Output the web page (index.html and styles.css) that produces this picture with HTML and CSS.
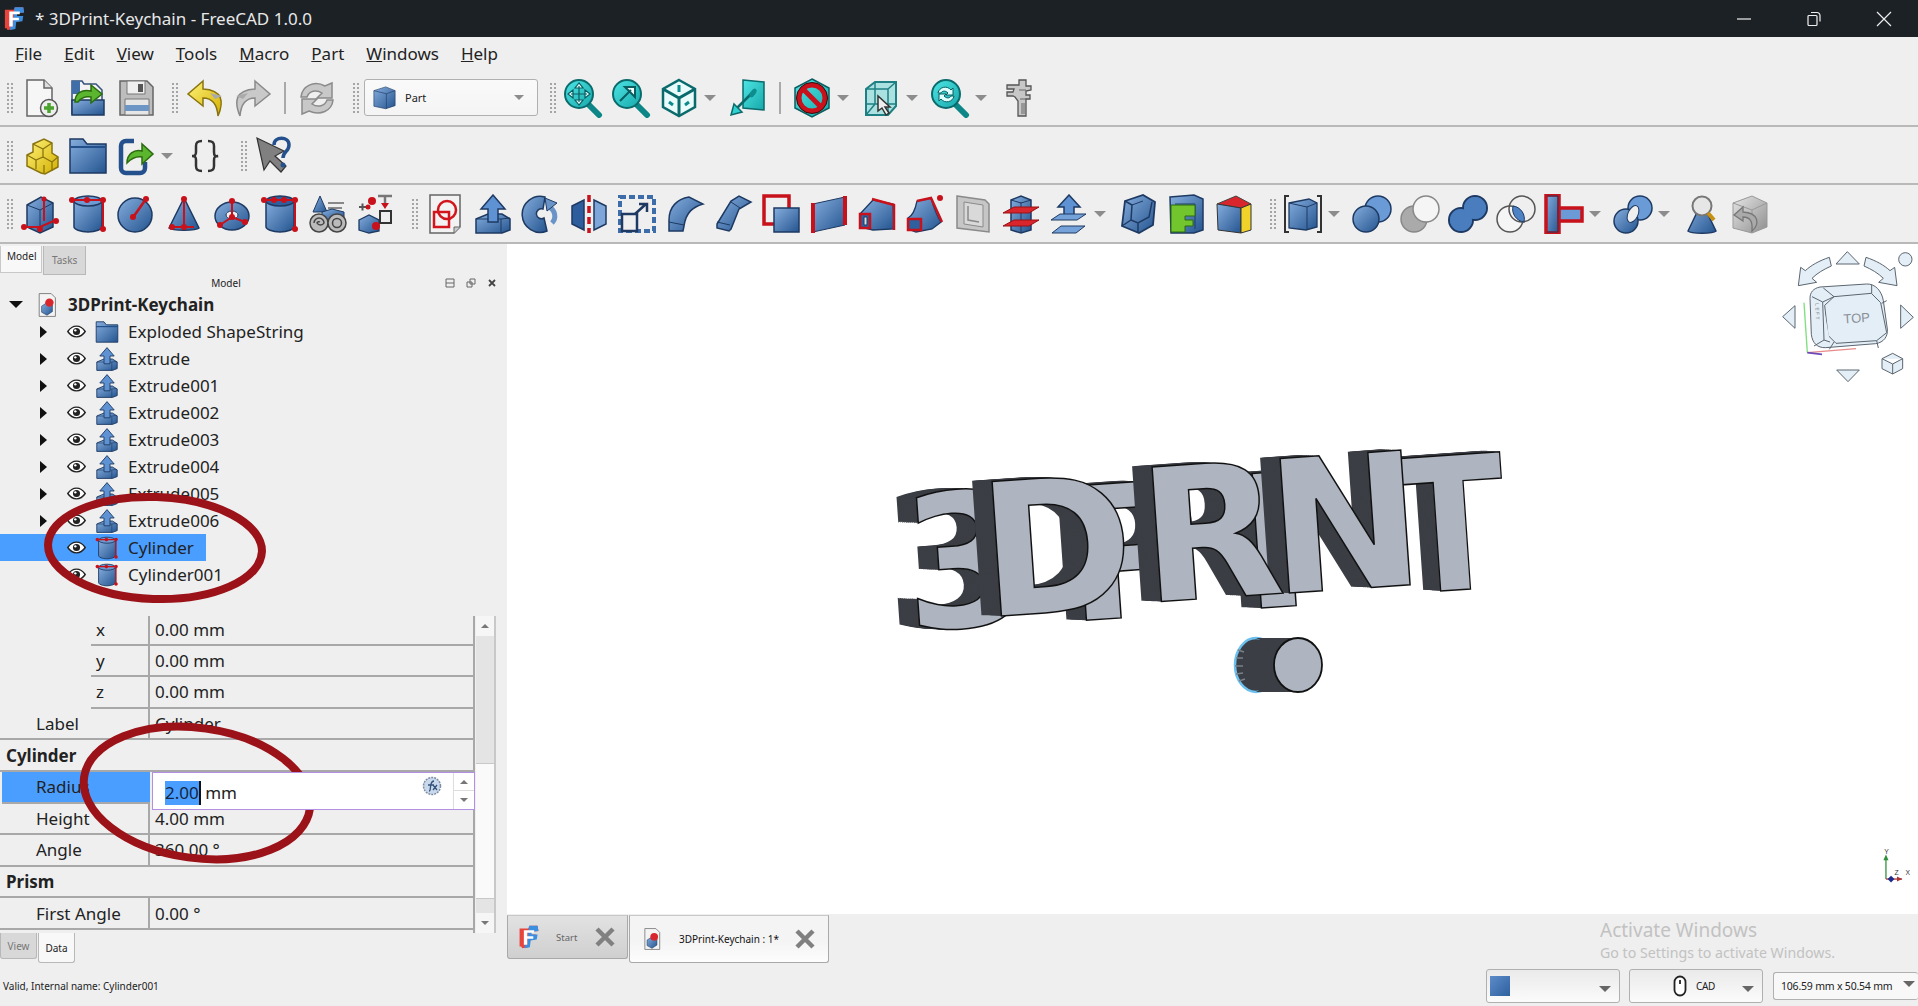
FILE: index.html
```html
<!DOCTYPE html>
<html>
<head>
    <title>3DPrint-Keychain - FreeCAD 1.0.0</title>
    <link rel="stylesheet" href="styles.css">
</head>
<body>
    <svg class="defs" xmlns="http://www.w3.org/2000/svg">
        <defs>
            <linearGradient id="b" x1="0" y1="0" x2="1" y2="1"><stop offset="0" stop-color="#86aede"/><stop offset="1" stop-color="#24548f"/></linearGradient>
            <linearGradient id="g" x1="0" y1="0" x2="1" y2="1"><stop offset="0" stop-color="#e6e6e6"/><stop offset="1" stop-color="#8e8e8e"/></linearGradient>
            <linearGradient id="y" x1="0" y1="0" x2="1" y2="1"><stop offset="0" stop-color="#fff27a"/><stop offset="1" stop-color="#d3b000"/></linearGradient>
            <linearGradient id="t" x1="0" y1="0" x2="1" y2="1"><stop offset="0" stop-color="#4fe5e5"/><stop offset="1" stop-color="#16a8aa"/></linearGradient>

            <symbol id="i-logo" viewBox="0 0 24 28"><path d="M1 4h10l2-3h9l1 6-9 1v3h6l-1 6-7 1-1 8-7 1-1-2H1z" fill="#e8443c"/><path d="M12 1h10l1 6-8 1v3h7l-1 6-7 1-1 8-6 1v-4h3z" fill="#3b8fe0"/><path d="M6 6h12v3h-8v4h7v3h-7v7H6z" fill="#fff"/></symbol>
            <symbol id="i-new" viewBox="0 0 40 40"><path d="M7 2h17l8 8v28H7z" fill="#f6f6f6" stroke="#666" stroke-width="1.5"/><path d="M24 2v8h8" fill="#ddd" stroke="#666" stroke-width="1.5"/><circle cx="29" cy="30" r="8.5" fill="#eee" stroke="#555" stroke-width="1.5"/><path d="M29 25v10M24 30h10" stroke="#4aa32a" stroke-width="3.5"/></symbol>
            <symbol id="i-open" viewBox="0 0 40 40"><path d="M4 3h10l2 3h12l6 6v24H4z" fill="#f2f2f2" stroke="#33527c" stroke-width="1.5"/><path d="M4 3h8v13H4z" fill="#3f6ea8"/><path d="M4 22h32v15H4z" fill="url(#b)" stroke="#1e3a63" stroke-width="1.5"/><path d="M7 24c0-9 7-13 16-11V7l11 9-11 9v-6c-6-1-10 1-13 5z" fill="#5bb52e" stroke="#2b6b10" stroke-width="1.5"/></symbol>
            <symbol id="i-save" viewBox="0 0 40 40"><path d="M4 3h27l6 6v28H4z" fill="#bdbdbd" stroke="#666" stroke-width="1.5"/><path d="M11 3h18v13H11z" fill="#eee" stroke="#777"/><path d="M22 6h5v8h-5z" fill="#555"/><path d="M9 21h24v16H9z" fill="#e6e6e6" stroke="#777"/><path d="M9 27h24v6H9z" fill="#6d96c6"/></symbol>
            <symbol id="i-undo" viewBox="0 0 40 40"><path d="M18 3 3 16l15 12v-8c9 0 14 5 15 18 6-14 5-26-15-27z" fill="url(#y)" stroke="#8a7410" stroke-width="1.5"/><path d="M25 15l12 3-7 3z" fill="#aaa"/></symbol>
            <symbol id="i-redo" viewBox="0 0 40 40"><path d="M22 3l15 13-15 12v-8C13 20 8 25 7 38 1 24 2 12 22 11z" fill="#c9c9c9" stroke="#8a8a8a" stroke-width="1.5"/><path d="M15 15 3 18l7 3z" fill="#aaa"/></symbol>
            <symbol id="i-refresh" viewBox="0 0 40 40"><path d="M4 19C5 8 17 2 28 8l7-3v15H20l5-5c-6-4-13-2-15 4z" fill="#c8c8c8" stroke="#8b8b8b" stroke-width="1.5"/><path d="M36 22c-1 11-13 16-24 11l-7 3V21h15l-5 5c6 4 13 2 15-4z" fill="#c8c8c8" stroke="#8b8b8b" stroke-width="1.5"/></symbol>
            <symbol id="i-fitall" viewBox="0 0 40 40"><path d="M24 25l12 12" stroke="#0c8686" stroke-width="6" stroke-linecap="round"/><circle cx="16" cy="16" r="14" fill="url(#t)" stroke="#0b6a6c" stroke-width="2"/><path d="M16 8v16M8 16h16M16 5l-4 5h8zM16 27l-4-5h8zM5 16l5-4v8zM27 16l-5-4v8z" fill="#dff" stroke="#0b5d60" stroke-width="1.2"/></symbol>
            <symbol id="i-fitsel" viewBox="0 0 40 40"><path d="M24 25l12 12" stroke="#0c8686" stroke-width="6" stroke-linecap="round"/><circle cx="16" cy="16" r="14" fill="url(#t)" stroke="#0b6a6c" stroke-width="2"/><path d="M9 23 20 12M14 9h10v10z" fill="#eff" stroke="#0b5d60" stroke-width="2"/></symbol>
            <symbol id="i-isocube" viewBox="0 0 40 40"><path d="M20 2 36 11v18L20 38 4 29V11z" fill="#e9fbfb" stroke="#0b6a6c" stroke-width="2.5"/><path d="M4 11l16 9 16-9M20 20v18" fill="none" stroke="#0b6a6c" stroke-width="3"/><path d="M20 7v7M10 24l4 3M30 24l-4 3" stroke="#0f8a8c" stroke-width="3"/></symbol>
            <symbol id="i-plane" viewBox="0 0 40 40"><path d="M15 2 36 4v28l-21-2z" fill="url(#t)" stroke="#0b6a6c" stroke-width="1.5"/><path d="M24 15 6 33" stroke="#0b6a6c" stroke-width="2.5"/><path d="M3 37l3-11 8 8z" fill="#2fd0d0" stroke="#0b6a6c" stroke-width="1.5"/><ellipse cx="25" cy="15" rx="2.5" ry="5" transform="rotate(35 25 15)" fill="#0e8d8f"/></symbol>
            <symbol id="i-nodraw" viewBox="0 0 40 40"><path d="M20 1 37 10v20L20 39 3 30V10z" fill="url(#t)" stroke="#0b5d60" stroke-width="1.5"/><circle cx="20" cy="20" r="13" fill="none" stroke="#c8111a" stroke-width="5"/><circle cx="20" cy="20" r="15.5" fill="none" stroke="#3a0a0a"/><path d="M11 11l18 18" stroke="#c8111a" stroke-width="5"/></symbol>
            <symbol id="i-boxsel" viewBox="0 0 40 40"><path d="M5 11 14 4h21v24l-8 9H5z" fill="#8fdcdc" fill-opacity=".7" stroke="#1f8083" stroke-width="2"/><path d="M5 11h22v26M27 11l8-7M14 4v22H5M14 26l-9 11M14 26h21" fill="none" stroke="#1f8083" stroke-width="1.5"/><path d="M17 18v15l4-3 4 7 3-2-4-6h5z" fill="#eee" stroke="#333" stroke-width="1.5"/></symbol>
            <symbol id="i-sync" viewBox="0 0 40 40"><path d="M24 25l12 12" stroke="#0c8686" stroke-width="6" stroke-linecap="round"/><circle cx="16" cy="16" r="14" fill="url(#t)" stroke="#0b6a6c" stroke-width="2"/><path d="M8 15c1-6 9-8 13-3l2-2v7h-7l2-2c-3-3-6-2-7 0zM24 18c-1 6-9 8-13 3l-2 2v-7h7l-2 2c3 3 6 2 7 0z" fill="#dff" stroke="#0b5d60"/></symbol>
            <symbol id="i-caliper" viewBox="0 0 40 40"><path d="M8 7h12V2h7v6h5v4l-5 1v4h4v4h-4v17h-8V23l-3-4-2-1H8v-4h6l1-3H8z" fill="#c7c7c7" stroke="#555" stroke-width="1.3"/><path d="M20 12h7M21 21h6M23 25v11M25 25v11" stroke="#666"/></symbol>
            <symbol id="i-parts" viewBox="0 0 40 40"><path d="M13 8 24 3l8 4v10l6 4v10l-13 7-4-1L7 30V19l6-3z" fill="url(#y)" stroke="#8a7410" stroke-width="1.5"/><path d="M13 8l10 5 9-6M23 13v9M7 19l9 5 7-3 9 5 6-5M16 24v9M32 26v9M24 37v-8" fill="none" stroke="#8a7410" stroke-width="1.3"/></symbol>
            <symbol id="i-folder" viewBox="0 0 40 40"><path d="M2 3h13l4 5h19v29H2z" fill="url(#b)" stroke="#1e3a63" stroke-width="1.5"/><path d="M2 11h36" stroke="#23508a" stroke-width="2"/></symbol>
            <symbol id="i-link" viewBox="0 0 40 40"><path d="M18 5H10a5 5 0 0 0-5 5v22a5 5 0 0 0 5 5h14a5 5 0 0 0 5-5v-6" fill="none" stroke="#24518d" stroke-width="4.5"/><path d="M11 27c0-9 7-14 15-12V8l11 10-11 10v-7c-6-1-10 1-15 6z" fill="#5bb52e" stroke="#2b6b10" stroke-width="1.5"/></symbol>
            <symbol id="i-braces" viewBox="0 0 40 40"><path d="M17 5c-5 0-6 2-6 5v6c0 3-1 4-4 4 3 0 4 1 4 4v6c0 3 1 5 6 5M23 5c5 0 6 2 6 5v6c0 3 1 5 4 4-3 0-4 1-4 4v6c0 3-1 5-6 5" fill="none" stroke="#333" stroke-width="2.5"/></symbol>
            <symbol id="i-help" viewBox="0 0 40 40"><path d="M3 2l7 32 6-9 11 11 5-6-11-10 9-5z" fill="#808080" stroke="#333" stroke-width="1.2"/><path d="M20 9c0-9 15-9 15 0 0 7-6 6-6 13" fill="none" stroke="#24518d" stroke-width="3.5"/><circle cx="29" cy="29" r="2.5" fill="#24518d"/></symbol>

            <symbol id="i-box" viewBox="0 0 40 40"><path d="M7 11 21 3l12 6v24l-13 6L7 33z" fill="url(#b)" stroke="#1e3a63" stroke-width="1.5"/><path d="M7 11l13 5 13-7M20 16v23" fill="none" stroke="#1e3a63"/><path d="M4 33h16l16-7M24 5v22" fill="none" stroke="#c8111a" stroke-width="2"/><circle cx="4" cy="33" r="3" fill="#c8111a"/><circle cx="20" cy="35" r="3" fill="#c8111a"/><circle cx="36" cy="27" r="3" fill="#c8111a"/><circle cx="24" cy="5" r="2.5" fill="#c8111a"/></symbol>
            <symbol id="i-cyl" viewBox="0 0 40 40"><path d="M6 7v26c0 2 6 5 14 5s14-3 14-5V7z" fill="url(#b)" stroke="#1e3a63" stroke-width="1.5"/><ellipse cx="20" cy="7" rx="14" ry="5" fill="#6e9bd4" stroke="#1e3a63" stroke-width="1.5"/><path d="M4 6h31v29" fill="none" stroke="#c8111a" stroke-width="2"/><circle cx="4" cy="6" r="3" fill="#c8111a"/><circle cx="19" cy="6" r="3" fill="#c8111a"/><circle cx="35" cy="6" r="3" fill="#c8111a"/><circle cx="35" cy="35" r="3" fill="#c8111a"/></symbol>
            <symbol id="i-sphere" viewBox="0 0 40 40"><circle cx="19" cy="21" r="17" fill="url(#b)" stroke="#1e3a63" stroke-width="1.5"/><path d="M18 22 30 5" stroke="#c8111a" stroke-width="2.5"/><circle cx="17" cy="23" r="3" fill="#c8111a"/><circle cx="30" cy="5" r="3" fill="#c8111a"/></symbol>
            <symbol id="i-cone" viewBox="0 0 40 40"><path d="M20 4 5 34c3 3 27 3 30 0z" fill="url(#b)" stroke="#1e3a63" stroke-width="1.5"/><path d="M20 4v30M8 33h22" stroke="#c8111a" stroke-width="2"/><circle cx="20" cy="5" r="3" fill="#c8111a"/><circle cx="8" cy="33" r="3" fill="#c8111a"/><circle cx="20" cy="33" r="3" fill="#c8111a"/></symbol>
            <symbol id="i-torus" viewBox="0 0 40 40"><ellipse cx="20" cy="22" rx="17" ry="14" fill="url(#b)" stroke="#1e3a63" stroke-width="1.5"/><ellipse cx="20" cy="21" rx="6" ry="4" fill="#efefef" stroke="#1e3a63"/><path d="M20 7v16M8 31l12-8 13 5" fill="none" stroke="#c8111a" stroke-width="2"/><circle cx="20" cy="7" r="3" fill="#c8111a"/><circle cx="20" cy="23" r="3" fill="#c8111a"/><circle cx="8" cy="31" r="3" fill="#c8111a"/><circle cx="33" cy="28" r="3" fill="#c8111a"/></symbol>
            <symbol id="i-tube" viewBox="0 0 40 40"><path d="M6 7v26c0 2 6 5 14 5s14-3 14-5V7z" fill="url(#b)" stroke="#1e3a63" stroke-width="1.5"/><ellipse cx="20" cy="7" rx="14" ry="5" fill="#2f5f9e" stroke="#1e3a63" stroke-width="1.5"/><path d="M4 6h31v29" fill="none" stroke="#c8111a" stroke-width="2"/><circle cx="4" cy="6" r="3" fill="#c8111a"/><circle cx="14" cy="6" r="3" fill="#c8111a"/><circle cx="24" cy="6" r="3" fill="#c8111a"/><circle cx="35" cy="6" r="3" fill="#c8111a"/><circle cx="35" cy="35" r="3" fill="#c8111a"/></symbol>
            <symbol id="i-prims" viewBox="0 0 40 40"><path d="M12 2 5 18h14z" fill="url(#b)" stroke="#1e3a63"/><path d="M20 9h16M20 14h14" stroke="#888" stroke-width="2"/><path d="M14 18l10-3 12 3v8H14z" fill="url(#b)" stroke="#1e3a63"/><circle cx="11" cy="29" r="9" fill="#bbb" stroke="#444" stroke-width="1.5"/><path d="M6 29a5 5 0 0 1 10 0 4 4 0 0 1-7 0 2 2 0 0 1 3-1" fill="none" stroke="#444" stroke-width="1.5"/><circle cx="29" cy="29" r="9" fill="#bbb" stroke="#444" stroke-width="1.5"/><circle cx="29" cy="29" r="4.5" fill="none" stroke="#444" stroke-width="1.5"/></symbol>
            <symbol id="i-builder" viewBox="0 0 40 40"><path d="M3 26 13 21l10 5v11l-10 2-10-3z" fill="url(#b)" stroke="#1e3a63" stroke-width="1.3"/><path d="M22 2h14M29 2v10" stroke="#777" stroke-width="2.5"/><path d="M25 9h8l-4 6z" fill="#c8111a"/><path d="M24 17h11v12H24z" fill="#eee" stroke="#333" stroke-width="2"/><path d="M3 13h7M6.5 9.5v7" stroke="#555" stroke-width="2"/><circle cx="16" cy="7" r="4" fill="#c8111a"/><circle cx="20" cy="32" r="4" fill="#c8111a"/><circle cx="12" cy="13" r="2.5" fill="#c8111a"/></symbol>
            <symbol id="i-sketch" viewBox="0 0 40 40"><path d="M5 1h30v32l-6 6H5z" fill="#f2f2f2" stroke="#666" stroke-width="1.5"/><path d="M35 33h-6v6" fill="#ccc" stroke="#666"/><path d="M9 18h15v15H9z" fill="none" stroke="#d2141c" stroke-width="2.5"/><circle cx="22" cy="16" r="9" fill="none" stroke="#d2141c" stroke-width="2.5"/></symbol>
            <symbol id="i-extrude" viewBox="0 0 40 40"><path d="M3 25l12-5h14l8 5v11l-8 3H3z" fill="url(#b)" stroke="#1e3a63" stroke-width="1.5"/><path d="M3 25h25l9-1M28 25v14" fill="none" stroke="#1e3a63"/><path d="M20 1 8 15h7v13h10V15h7z" fill="#5f92d2" stroke="#1e3a63" stroke-width="1.5"/></symbol>
            <symbol id="i-revolve" viewBox="0 0 40 40"><path d="M24 3A18 18 0 1 0 26 37l-3-13a5 5 0 1 1-1-9z" fill="url(#b)" stroke="#1e3a63" stroke-width="1.5"/><path d="M28 13a10 10 0 0 1 3 16" fill="none" stroke="#6a94c8" stroke-width="5"/><path d="M24 4l12 5-10 8z" fill="#6a94c8" stroke="#1e3a63"/></symbol>
            <symbol id="i-mirror" viewBox="0 0 40 40"><path d="M3 12 15 6v30L3 30z" fill="#2d5d9c" stroke="#1e3a63" stroke-width="1.5"/><path d="M37 12 25 6v30l12-6z" fill="#7ea6d8" stroke="#1e3a63" stroke-width="1.5"/><path d="M20 1v38" stroke="#c8111a" stroke-width="3.5" stroke-dasharray="7 4"/></symbol>
            <symbol id="i-scale" viewBox="0 0 40 40"><path d="M3 3h34v34H3z" fill="none" stroke="#3d6da8" stroke-width="4" stroke-dasharray="6 3"/><path d="M5 20h15v17H5z" fill="#efefef" stroke="#1e3a63" stroke-width="2.5"/><path d="M18 20 29 10M22 10h8v8" fill="none" stroke="#1e3a63" stroke-width="2.5"/></symbol>
            <symbol id="i-fillet" viewBox="0 0 40 40"><path d="M4 37V26C4 13 12 5 24 3l14 7c-10 3-17 8-19 22l-1 5z" fill="url(#b)" stroke="#1e3a63" stroke-width="1.5"/><path d="M4 28l15 3" stroke="#1e3a63"/></symbol>
            <symbol id="i-chamfer" viewBox="0 0 40 40"><path d="M4 30 18 7l8-5 12 6-12 7-8 20-2 2-12-3z" fill="url(#b)" stroke="#1e3a63" stroke-width="1.5"/><path d="M4 28l13 3M18 8l9 6" stroke="#1e3a63"/></symbol>
            <symbol id="i-offset" viewBox="0 0 40 40"><path d="M3 2h25v28H3z" fill="none" stroke="#c8111a" stroke-width="3.5"/><path d="M13 14h25v24H13z" fill="url(#b)" stroke="#1e3a63" stroke-width="1.5"/></symbol>
            <symbol id="i-ruled" viewBox="0 0 40 40"><path d="M4 10 36 3v28L4 38z" fill="url(#b)" stroke="#1e3a63"/><path d="M4 9v30M36 2v29" stroke="#c8111a" stroke-width="4"/></symbol>
            <symbol id="i-loft" viewBox="0 0 40 40"><path d="M3 20 16 6l20 4 1 25-21 1-13-3z" fill="url(#b)" stroke="#1e3a63" stroke-width="1.3"/><path d="M15 5l22 6v25" fill="none" stroke="#c8111a" stroke-width="2.5"/><path d="M3 20h10v14H3z" fill="#2e5f9f" stroke="#c8111a" stroke-width="2.5"/><path d="M7 23h3v8H7z" fill="#ddd" stroke="#1e3a63"/></symbol>
            <symbol id="i-sweep" viewBox="0 0 40 40"><path d="M3 24c4-2 7-7 9-17l14-3c3 10 5 17 10 24l-9 7-16 3-8-3z" fill="url(#b)" stroke="#1e3a63" stroke-width="1.3"/><path d="M12 7l14-3 11 24" fill="none" stroke="#c8111a" stroke-width="2.5"/><path d="M3 25h13v11H3z" fill="#2e5f9f" stroke="#c8111a" stroke-width="2.5"/><circle cx="35" cy="4" r="3" fill="#c8111a"/></symbol>
            <symbol id="i-thick" viewBox="0 0 40 40"><path d="M4 2l28 4 4 4v28L4 34z" fill="#c6c6c6" stroke="#8a8a8a" stroke-width="1.5"/><path d="M11 8l19 3v22l-19-3z" fill="#d9d9d9" stroke="#8a8a8a"/><path d="M15 12v14l11 2" fill="none" stroke="#8a8a8a" stroke-width="1.5"/></symbol>
            <symbol id="i-sections" viewBox="0 0 40 40"><path d="M10 6l10-4 10 4v30l-10 3-10-3z" fill="url(#b)" stroke="#1e3a63" stroke-width="1.5"/><path d="M20 8v31M10 6l10 3 10-3" fill="none" stroke="#1e3a63"/><path d="M2 19 13 13h25l-10 6zM2 32l11-6h25l-10 6z" fill="#d8262c" stroke="#9a1015"/></symbol>
            <symbol id="i-push" viewBox="0 0 40 40"><path d="M20 1 9 13h6v9h10v-9h6z" fill="#5f92d2" stroke="#1e3a63" stroke-width="1.5"/><path d="M2 26 11 20h26l-9 6z" fill="#76a2da" stroke="#1e3a63"/><path d="M3 39l9-7h24l-9 7z" fill="#76a2da" stroke="#1e3a63"/></symbol>
            <symbol id="i-solid" viewBox="0 0 40 40"><path d="M7 7 25 1l12 7-2 23-14 8-17-7z" fill="url(#b)" stroke="#1e3a63" stroke-width="1.8"/><path d="M7 7l7 4-1 15 7 3 11-6 3-15M20 29v10M13 26 4 32" fill="none" stroke="#1e3a63" stroke-width="1.5"/><path d="M14 11l11-4" stroke="#1e3a63"/></symbol>
            <symbol id="i-fshape" viewBox="0 0 40 40"><path d="M4 3 28 1l9 4v31l-9 3H5z" fill="url(#b)" stroke="#1e3a63" stroke-width="1.5"/><path d="M9 10h20v25" fill="none" stroke="#1e3a63"/><path d="M5 11h24v11H19v4h8v6h-8v6H5z" fill="#72c52d" stroke="#2a6b10"/></symbol>
            <symbol id="i-colorcube" viewBox="0 0 40 40"><path d="M3 10 22 2l15 8-10 4z" fill="#d8262c" stroke="#444"/><path d="M3 10l24 4v25L4 36z" fill="url(#b)" stroke="#333"/><path d="M27 14l10-4v26l-10 3z" fill="#f0d22a" stroke="#333"/></symbol>
            <symbol id="i-compound" viewBox="0 0 40 40"><path d="M6 2H2v36h4M34 2h4v36h-4" fill="none" stroke="#333" stroke-width="2"/><path d="M6 9l20-4 8 4v24l-11 3-17-2z" fill="url(#b)" stroke="#1e3a63" stroke-width="1.3"/><path d="M6 9l18 4 10-4M24 13v23" fill="none" stroke="#1e3a63"/></symbol>
            <symbol id="i-bool" viewBox="0 0 40 40"><circle cx="26" cy="15" r="13" fill="#6b9bd6" stroke="#1e3a63" stroke-width="1.5"/><circle cx="14" cy="25" r="13" fill="url(#b)" stroke="#1e3a63" stroke-width="1.5"/></symbol>
            <symbol id="i-cut" viewBox="0 0 40 40"><circle cx="14" cy="25" r="13" fill="#aaa" stroke="#888" stroke-width="1.5"/><circle cx="26" cy="15" r="13" fill="#f5f5f5" stroke="#888" stroke-width="1.5"/></symbol>
            <symbol id="i-union" viewBox="0 0 40 40"><circle cx="13" cy="26" r="12" fill="#3f72b4" stroke="#1e3a63" stroke-width="2"/><circle cx="27" cy="14" r="12" fill="#3f72b4" stroke="#1e3a63" stroke-width="2"/><circle cx="13" cy="26" r="11" fill="#4a7dbe"/><circle cx="27" cy="14" r="11" fill="#4a7dbe"/></symbol>
            <symbol id="i-common" viewBox="0 0 40 40"><circle cx="14" cy="25" r="13" fill="#f5f5f5" stroke="#555" stroke-width="1.5"/><circle cx="26" cy="15" r="13" fill="none" stroke="#555" stroke-width="1.5"/><path d="M17 12a13 13 0 0 1 11 16 13 13 0 0 1-11-16z" fill="#4d82c4" stroke="#1e3a63"/></symbol>
            <symbol id="i-join" viewBox="0 0 40 40"><path d="M2 1h13v38H2z" fill="url(#b)" stroke="#c8111a" stroke-width="3.5"/><path d="M15 14h23v13H15z" fill="#6b9bd6" stroke="#c8111a" stroke-width="3.5"/><path d="M3 2h11v36H3" fill="none" stroke="#1e3a63"/></symbol>
            <symbol id="i-split" viewBox="0 0 40 40"><circle cx="27" cy="14" r="12" fill="#6b9bd6" stroke="#1e3a63" stroke-width="1.5"/><circle cx="13" cy="27" r="12" fill="url(#b)" stroke="#1e3a63" stroke-width="1.5"/><ellipse cx="20" cy="20" rx="5" ry="9" transform="rotate(25 20 20)" fill="#efefef" stroke="#1e3a63"/></symbol>
            <symbol id="i-check" viewBox="0 0 40 40"><path d="M20 8 6 37c3 3 25 3 28 0z" fill="url(#b)" stroke="#1e3a63" stroke-width="1.5"/><circle cx="20" cy="12" r="9.5" fill="#e6e6e6" stroke="#777" stroke-width="2"/><path d="M26 19l6 7" stroke="#c89010" stroke-width="4"/></symbol>
            <symbol id="i-defeat" viewBox="0 0 40 40"><path d="M3 9 22 2l15 7v24l-15 6-19-5z" fill="url(#g)" stroke="#999"/><path d="M3 9l19 7 15-7M22 16v23" fill="none" stroke="#999"/><path d="M13 13 4 21l9 6v-4c6 0 10 3 9 14 8-7 7-18-9-19z" fill="#aaa" stroke="#777" stroke-width="1.3"/></symbol>
            <symbol id="i-doc" viewBox="0 0 40 40"><path d="M7 1h20l7 7v31H7z" fill="#f4f4f4" stroke="#777" stroke-width="1.5"/><path d="M11 22l9-6 9 4v11l-9 6-9-5z" fill="url(#b)" stroke="#1e3a63"/><circle cx="24" cy="16" r="7" fill="#d8262c"/></symbol>
            <symbol id="i-eye" viewBox="0 0 24 16"><path d="M1 8c6-9 16-9 22 0-6 9-16 9-22 0z" fill="#fff" stroke="#222" stroke-width="1.8"/><circle cx="12" cy="8" r="4.5" fill="#222"/><circle cx="10.5" cy="6.5" r="1.5" fill="#fff"/></symbol>
        </defs>
    </svg>

    <div class="titlebar">
        <svg class="title-logo"><use href="#i-logo"/></svg>
        <span class="title-text">* 3DPrint-Keychain - FreeCAD 1.0.0</span>
        <div class="win-btns">
            <svg viewBox="0 0 16 16"><path d="M1 8h14" stroke="#eee" stroke-width="1.2"/></svg>
            <svg viewBox="0 0 16 16"><path d="M5 1.500h6a3 3 0 0 1 3 3v6M2 5.500a1 1 0 0 1 1-1h7a1 1 0 0 1 1 1v8a1 1 0 0 1-1 1H3a1 1 0 0 1-1-1z" fill="none" stroke="#eee" stroke-width="1.2"/></svg>
            <svg viewBox="0 0 16 16"><path d="M1 1l14 14M15 1 1 15" stroke="#eee" stroke-width="1.2"/></svg>
        </div>
    </div>

    <div class="menubar">
        <span><u>F</u>ile</span><span><u>E</u>dit</span><span><u>V</u>iew</span><span><u>T</u>ools</span><span><u>M</u>acro</span><span><u>P</u>art</span><span><u>W</u>indows</span><span><u>H</u>elp</span>
    </div>

    <div class="toolbar tb1">
        <i class="grip"></i>
        <div class="tool"><svg><use href="#i-new"/></svg></div>
        <div class="tool"><svg><use href="#i-open"/></svg></div>
        <div class="tool"><svg><use href="#i-save"/></svg></div>
        <i class="grip"></i>
        <div class="tool"><svg><use href="#i-undo"/></svg></div>
        <div class="tool"><svg><use href="#i-redo"/></svg></div>
        <i class="sep"></i>
        <div class="tool"><svg><use href="#i-refresh"/></svg></div>
        <i class="grip"></i>
        <div class="wb-combo">
            <svg class="wb-icon" viewBox="0 0 40 40"><path d="M3 9 22 3l15 6v24l-15 5-19-4z" fill="url(#b)" stroke="#1e3a63"/><path d="M3 9l20 5 14-5M23 14v24" fill="none" stroke="#1e3a63"/></svg>
            <span>Part</span>
            <i class="caret"></i>
        </div>
        <i class="grip"></i>
        <div class="tool"><svg><use href="#i-fitall"/></svg></div>
        <div class="tool"><svg><use href="#i-fitsel"/></svg></div>
        <div class="tool"><svg><use href="#i-isocube"/></svg></div>
        <i class="drop"></i>
        <div class="tool"><svg><use href="#i-plane"/></svg></div>
        <i class="sep"></i>
        <div class="tool"><svg><use href="#i-nodraw"/></svg></div>
        <i class="drop"></i>
        <div class="tool"><svg><use href="#i-boxsel"/></svg></div>
        <i class="drop"></i>
        <div class="tool"><svg><use href="#i-sync"/></svg></div>
        <i class="drop"></i>
        <div class="tool"><svg><use href="#i-caliper"/></svg></div>
    </div>

    <div class="toolbar tb2">
        <i class="grip"></i>
        <div class="tool"><svg><use href="#i-parts"/></svg></div>
        <div class="tool"><svg><use href="#i-folder"/></svg></div>
        <div class="tool"><svg><use href="#i-link"/></svg></div>
        <i class="drop"></i>
        <div class="tool"><svg><use href="#i-braces"/></svg></div>
        <i class="grip"></i>
        <div class="tool"><svg><use href="#i-help"/></svg></div>
    </div>

    <div class="toolbar tb3">
        <i class="grip"></i>
        <div class="tool"><svg><use href="#i-box"/></svg></div>
        <div class="tool"><svg><use href="#i-cyl"/></svg></div>
        <div class="tool"><svg><use href="#i-sphere"/></svg></div>
        <div class="tool"><svg><use href="#i-cone"/></svg></div>
        <div class="tool"><svg><use href="#i-torus"/></svg></div>
        <div class="tool"><svg><use href="#i-tube"/></svg></div>
        <div class="tool"><svg><use href="#i-prims"/></svg></div>
        <div class="tool"><svg><use href="#i-builder"/></svg></div>
        <i class="grip"></i>
        <div class="tool"><svg><use href="#i-sketch"/></svg></div>
        <div class="tool"><svg><use href="#i-extrude"/></svg></div>
        <div class="tool"><svg><use href="#i-revolve"/></svg></div>
        <div class="tool"><svg><use href="#i-mirror"/></svg></div>
        <div class="tool"><svg><use href="#i-scale"/></svg></div>
        <div class="tool"><svg><use href="#i-fillet"/></svg></div>
        <div class="tool"><svg><use href="#i-chamfer"/></svg></div>
        <div class="tool"><svg><use href="#i-offset"/></svg></div>
        <div class="tool"><svg><use href="#i-ruled"/></svg></div>
        <div class="tool"><svg><use href="#i-loft"/></svg></div>
        <div class="tool"><svg><use href="#i-sweep"/></svg></div>
        <div class="tool"><svg><use href="#i-thick"/></svg></div>
        <div class="tool"><svg><use href="#i-sections"/></svg></div>
        <div class="tool"><svg><use href="#i-push"/></svg></div>
        <i class="drop"></i>
        <div class="tool"><svg><use href="#i-solid"/></svg></div>
        <div class="tool"><svg><use href="#i-fshape"/></svg></div>
        <div class="tool"><svg><use href="#i-colorcube"/></svg></div>
        <i class="grip"></i>
        <div class="tool"><svg><use href="#i-compound"/></svg></div>
        <i class="drop"></i>
        <div class="tool"><svg><use href="#i-bool"/></svg></div>
        <div class="tool"><svg><use href="#i-cut"/></svg></div>
        <div class="tool"><svg><use href="#i-union"/></svg></div>
        <div class="tool"><svg><use href="#i-common"/></svg></div>
        <div class="tool"><svg><use href="#i-join"/></svg></div>
        <i class="drop"></i>
        <div class="tool"><svg><use href="#i-split"/></svg></div>
        <i class="drop"></i>
        <div class="tool"><svg><use href="#i-check"/></svg></div>
        <div class="tool"><svg><use href="#i-defeat"/></svg></div>
    </div>

    <div class="main">
        <div class="side">
            <div class="dock-tabs">
                <div class="dock-tab active">Model</div>
                <div class="dock-tab">Tasks</div>
            </div>
            <div class="dock-title">
                <span>Model</span>
                <div class="dock-btns">
                    <svg viewBox="0 0 10 10"><path d="M1 1h8v8H1zM1 5h8" fill="none" stroke="#666"/></svg>
                    <svg viewBox="0 0 10 10"><path d="M4 1h5v5H4zM1 4h5v5H1z" fill="none" stroke="#666"/></svg>
                    <svg viewBox="0 0 10 10"><path d="M2 2l6 6M8 2 2 8" stroke="#444" stroke-width="1.8"/></svg>
                </div>
            </div>

            <div class="tree">
                <div class="tree-row root"><i class="tri-down"></i><svg class="tree-icon"><use href="#i-doc"/></svg><span>3DPrint-Keychain</span></div>
                <div class="tree-row"><i class="tri-right"></i><svg class="eye"><use href="#i-eye"/></svg><svg class="tree-icon"><use href="#i-folder"/></svg><span>Exploded ShapeString</span></div>
                <div class="tree-row"><i class="tri-right"></i><svg class="eye"><use href="#i-eye"/></svg><svg class="tree-icon"><use href="#i-extrude"/></svg><span>Extrude</span></div>
                <div class="tree-row"><i class="tri-right"></i><svg class="eye"><use href="#i-eye"/></svg><svg class="tree-icon"><use href="#i-extrude"/></svg><span>Extrude001</span></div>
                <div class="tree-row"><i class="tri-right"></i><svg class="eye"><use href="#i-eye"/></svg><svg class="tree-icon"><use href="#i-extrude"/></svg><span>Extrude002</span></div>
                <div class="tree-row"><i class="tri-right"></i><svg class="eye"><use href="#i-eye"/></svg><svg class="tree-icon"><use href="#i-extrude"/></svg><span>Extrude003</span></div>
                <div class="tree-row"><i class="tri-right"></i><svg class="eye"><use href="#i-eye"/></svg><svg class="tree-icon"><use href="#i-extrude"/></svg><span>Extrude004</span></div>
                <div class="tree-row"><i class="tri-right"></i><svg class="eye"><use href="#i-eye"/></svg><svg class="tree-icon"><use href="#i-extrude"/></svg><span>Extrude005</span></div>
                <div class="tree-row"><i class="tri-right"></i><svg class="eye"><use href="#i-eye"/></svg><svg class="tree-icon"><use href="#i-extrude"/></svg><span>Extrude006</span></div>
                <div class="tree-row selected"><i class="tri-none"></i><svg class="eye"><use href="#i-eye"/></svg><svg class="tree-icon"><use href="#i-cyl"/></svg><span>Cylinder</span></div>
                <div class="tree-row"><i class="tri-none"></i><svg class="eye"><use href="#i-eye"/></svg><svg class="tree-icon"><use href="#i-cyl"/></svg><span>Cylinder001</span></div>
            </div>

            <div class="props">
                <div class="prop-table">
                    <div class="prow sub first"><div class="pname">x</div><div class="pval">0.00 mm</div></div>
                    <div class="prow sub"><div class="pname">y</div><div class="pval">0.00 mm</div></div>
                    <div class="prow sub"><div class="pname">z</div><div class="pval">0.00 mm</div></div>
                    <div class="prow"><div class="pname">Label</div><div class="pval">Cylinder</div></div>
                    <div class="pgroup">Cylinder</div>
                    <div class="prow current">
                        <div class="pname">Radius</div>
                        <div class="editor">
                            <span class="edit-text"><span class="edit-sel">2.00</span><i class="edit-caret"></i> mm</span>
                            <svg class="edit-fx" viewBox="0 0 20 20"><circle cx="10" cy="10" r="8.5" fill="#c9d8ea" stroke="#7c8ea6" stroke-width="1.5" stroke-dasharray="2 1"/><path d="M7 15c2 0 1-4 2-7s2-3 3-3M6 9h6M11 9l4 5M15 9l-4 5" fill="none" stroke="#33527c" stroke-width="1.3"/></svg>
                            <div class="spin"><b><i class="up"></i></b><b><i class="down"></i></b></div>
                        </div>
                    </div>
                    <div class="prow"><div class="pname">Height</div><div class="pval">4.00 mm</div></div>
                    <div class="prow"><div class="pname">Angle</div><div class="pval">360.00 °</div></div>
                    <div class="pgroup">Prism</div>
                    <div class="prow"><div class="pname">First Angle</div><div class="pval">0.00 °</div></div>
                </div>
                <div class="scrollbar">
                    <div class="sb-btn"><i class="up"></i></div>
                    <div class="sb-trough"></div>
                    <div class="sb-thumb"></div>
                    <div class="sb-trough small"></div>
                    <div class="sb-btn"><i class="down"></i></div>
                </div>
            </div>

            <div class="prop-tabs">
                <div class="prop-tab">View</div>
                <div class="prop-tab active">Data</div>
            </div>

            <svg class="marks" viewBox="0 0 507 722">
                <ellipse cx="155" cy="304" rx="107" ry="51" transform="rotate(2 155 304)"/>
                <ellipse cx="197" cy="549" rx="114" ry="65" transform="rotate(8 197 549)"/>
            </svg>
        </div>

        <div class="work">
            <div class="viewport">
                <div class="model">
                    <span class="letter l3">3</span>
                    <span class="letter lp">P</span>
                    <span class="letter li">I</span>
                    <span class="letter lt">T</span>
                    <span class="letter ln">N</span>
                    <span class="letter ld">D</span>
                    <span class="letter lr">R</span>
                    <svg class="cylinder" viewBox="0 0 100 70">
                        <ellipse cx="25" cy="33" rx="21" ry="27" fill="#3b3e44" stroke="#6cc0ee" stroke-width="2.5"/>
                        <path d="M7 18l6 2M5 26h7M4 34h8M5 42l7-1M8 49l6-2" stroke="#7a8088" stroke-width="1.5"/>
                        <path d="M25 6h40v54H25c12-6 16-15 16-27S37 11 25 6z" fill="#3b3e44"/>
                        <ellipse cx="67" cy="33" rx="24" ry="27" fill="#aeb5c0" stroke="#111" stroke-width="1.8"/>
                    </svg>
                </div>

                <svg class="navcube" viewBox="0 0 474 450">
                    <g fill="#e4eef7" stroke="#5c6670" stroke-width="3">
                        <path d="M228 72 262 35l36 37z"/>
                        <path d="M68 230l37-33v68z"/>
                        <path d="M422 195l38 37-38 33z"/>
                        <path d="M230 390h68l-34 35z"/>
                        <circle cx="436" cy="58" r="20"/>
                        <path d="M208 52c-30 10-55 24-72 40l-14-10-7 55 55-10-14-12c15-15 35-27 58-37z"/>
                        <path d="M318 52c30 10 55 24 72 40l14-10 7 55-55-10 14-12c-15-15-35-27-58-37z"/>
                        <path d="M150 175c0-18 10-30 30-34l140-9c25-1 45 20 50 50l12 85c2 22-10 40-35 44l-150 12c-25 1-40-14-43-40z"/>
                        <path d="M222 170l112-10 28 28 18 90-30 24-122 8-24-24-10-90z"/>
                        <path d="M190 144l32 26M335 134v26M365 190l15-8M350 302l5 22M222 306l-14 22M188 186l34-16"/>
                        <path d="M188 186l4 114 18 6M156 170l32 16M162 318l30-18"/>
                        <path d="M398 340l30 16v30l-30 16-32-16v-30zM366 356l32 16 30-16M398 372v30"/>
                    </g>
                    <path d="M132 188l10 150" stroke="#7fe07f" stroke-width="4" fill="none"/>
                    <path d="M142 338l146-12" stroke="#e88a8a" stroke-width="4" fill="none"/>
                    <path d="M142 338l44 5" stroke="#6a4bb8" stroke-width="5" fill="none"/>
                    <text class="nav-top" x="290" y="248" transform="rotate(-4 290 235)">TOP</text>
                    <text class="nav-side" x="0" y="0" transform="translate(166 190) rotate(88)">LEFT</text>
                </svg>

                <svg class="axes" viewBox="0 0 40 46">
                    <path d="M7 36V12" stroke="#2f8f3a" stroke-width="1.5"/>
                    <path d="M7 7l-3 7h6z" fill="#2f8f3a"/>
                    <path d="M7 36h19" stroke="#a33" stroke-width="1.5"/>
                    <path d="M26 36l-6-3v6z" fill="#a33"/>
                    <path d="M13 32l4 4-4 4-4-4z" fill="#1d2a8c"/>
                    <text x="5" y="7">Y</text>
                    <text x="17" y="31">Z</text>
                    <text x="30" y="31">X</text>
                </svg>
            </div>

            <div class="doc-tabs">
                <div class="doc-tab start">
                    <svg class="doc-icon"><use href="#i-logo"/></svg>
                    <span>Start</span>
                    <svg class="doc-close" viewBox="0 0 20 20"><path d="M2 2l16 16M18 2 2 18" stroke="#808080" stroke-width="4.5"/></svg>
                </div>
                <div class="doc-tab active">
                    <svg class="doc-icon"><use href="#i-doc"/></svg>
                    <span>3DPrint-Keychain : 1*</span>
                    <svg class="doc-close" viewBox="0 0 20 20"><path d="M2 2l16 16M18 2 2 18" stroke="#808080" stroke-width="4.5"/></svg>
                </div>
            </div>

            <div class="activate">
                <div class="act-big">Activate Windows</div>
                <div class="act-small">Go to Settings to activate Windows.</div>
            </div>
        </div>
    </div>

    <div class="statusbar">
        <span class="status-msg">Valid, Internal name: Cylinder001</span>
        <div class="st-combo"><i class="st-swatch"></i><i class="caret"></i></div>
        <div class="st-combo nav">
            <svg viewBox="0 0 14 22"><rect x="1.5" y="1.5" width="11" height="19" rx="5.5" fill="#fff" stroke="#222" stroke-width="1.8"/><path d="M7 5v4" stroke="#222" stroke-width="1.8"/></svg>
            <span>CAD</span>
            <i class="caret"></i>
        </div>
        <div class="st-dim"><span>106.59 mm x 50.54 mm</span><i class="caret"></i></div>
    </div>
</body>
</html>
```

FILE: styles.css
```css
* { box-sizing: border-box; }
html, body { height: 100%; }
body {
    margin: 0;
    width: 1918px;
    height: 1006px;
    overflow: hidden;
    display: flex;
    flex-direction: column;
    background: #efefef;
    color: #222;
    font-family: "Noto Sans", "Open Sans", sans-serif;
    font-size: 17px;
}
i { display: block; font-style: normal; }
.defs { position: absolute; width: 0; height: 0; }

/* title + menu */
.titlebar {
    height: 37px;
    flex: none;
    display: flex;
    align-items: center;
    background: #1c2126;
    color: #e8e8e8;
    padding-left: 4px;
}
.title-logo { width: 21px; height: 25px; margin-right: 10px; }
.title-text { font-size: 17px; }
.win-btns { margin-left: auto; display: flex; align-items: center; gap: 54px; padding-right: 26px; }
.win-btns svg { width: 16px; height: 16px; }

.menubar {
    height: 35px;
    flex: none;
    display: flex;
    align-items: center;
    gap: 22px;
    padding: 0 0 3px 15px;
    font-size: 17px;
}

/* toolbars */
.toolbar {
    flex: none;
    display: flex;
    align-items: center;
    padding-left: 6px;
    border-bottom: 2px solid #b9b9b9;
}
.tb1 { height: 55px; padding-bottom: 2px; }
.tb2 { height: 58px; padding-top: 2px; }
.tb3 { height: 59px; }
.tool { width: 48px; height: 42px; display: flex; align-items: center; justify-content: center; flex: none; }
.tool svg { width: 40px; height: 40px; }
.grip {
    width: 9px;
    height: 32px;
    margin: 0 1px 0 11px;
    background: radial-gradient(circle, #a5a5a5 1px, transparent 1.2px) 0 0 / 4px 4px;
}
.grip:first-child { margin-left: 0; }
.sep { width: 2px; height: 32px; margin: 0 7px; background: #a9a9a9; flex: none; }
.drop { width: 21px; flex: none; height: 10px; }
.drop::after, .caret {
    content: "";
    display: block;
    width: 0;
    height: 0;
    border-left: 6px solid transparent;
    border-right: 6px solid transparent;
    border-top: 6px solid #8c8c8c;
}
.drop::after { margin-left: 1px; margin-top: 2px; }
.wb-combo {
    width: 174px;
    height: 37px;
    margin-left: 2px;
    display: flex;
    align-items: center;
    padding-left: 7px;
    background: linear-gradient(#fafafa, #f4f4f4);
    border: 1px solid #b0b0b0;
    border-radius: 3px;
    font-size: 11px;
}
.wb-icon { width: 25px; height: 25px; margin-right: 8px; }
.wb-combo .caret { margin-left: auto; margin-right: 13px; border-left-width: 5px; border-right-width: 5px; border-top-width: 5px; }

/* main split */
.main { flex: 1; min-height: 0; display: flex; }
.side {
    width: 507px;
    flex: none;
    position: relative;
    display: flex;
    flex-direction: column;
}
.marks { position: absolute; left: 0; top: 0; width: 507px; height: 722px; pointer-events: none; }
.marks ellipse { fill: none; stroke: #9b1218; stroke-width: 8; }

.dock-tabs { height: 31px; display: flex; align-items: flex-start; padding-top: 2px; flex: none; font-size: 10px; }
.dock-tab {
    height: 29px;
    padding: 0 8px;
    display: flex;
    align-items: center;
    background: #d8d8d8;
    border: 1px solid #b8b8b8;
    border-top: none;
    color: #777;
    margin-left: 1px;
}
.dock-tab.active { width: 42px; padding: 3px 0 0 6px; margin: 0; background: #f8f8f8; color: #222; height: 27px; border-color: #c8c8c8; align-items: flex-start; }
.dock-title { height: 16px; flex: none; position: relative; text-align: center; font-size: 10px; line-height: 16px; padding-right: 55px; }
.dock-btns { position: absolute; right: 10px; top: 3px; display: flex; gap: 11px; }
.dock-btns svg { width: 10px; height: 10px; }

.tree { height: 325px; flex: none; }
.tree-row { height: 27px; display: flex; align-items: center; white-space: nowrap; }
.tri-right { width: 0; height: 0; margin-left: 40px; border-top: 6px solid transparent; border-bottom: 6px solid transparent; border-left: 7px solid #111; }
.tri-none { width: 7px; height: 0; margin-left: 40px; }
.tri-down { width: 0; height: 0; margin-left: 9px; border-left: 7px solid transparent; border-right: 7px solid transparent; border-top: 7px solid #111; }
.eye { width: 19px; height: 13px; margin-left: 20px; flex: none; }
.tree-icon { width: 24px; height: 24px; margin-left: 9px; margin-right: 9px; flex: none; }
.root .tree-icon { margin-left: 12px; margin-right: 6px; }
.root span { font-weight: bold; margin-left: 3px; }
.selected { background: linear-gradient(#4a9eff, #4a9eff) 0 0 / 206px 100% no-repeat; }

/* property editor */
.props { height: 317px; flex: none; display: flex; }
.prop-table { width: 475px; flex: none; border-right: 2px solid #a8a8a8; position: relative; }
.prow { height: 31.6px; display: grid; grid-template-columns: 150px 1fr; }
.pname {
    padding-left: 36px;
    border-bottom: 2px solid #a8a8a8;
    border-right: 2px solid #a8a8a8;
    display: flex;
    align-items: center;
    white-space: nowrap;
    overflow: hidden;
}
.pval { padding-left: 5px; border-bottom: 2px solid #a8a8a8; display: flex; align-items: center; }
.sub .pname { margin-left: 91px; padding-left: 5px; }
.first { height: 29.6px; }
.pgroup { height: 31.6px; padding-left: 6px; font-weight: bold; border-bottom: 2px solid #a8a8a8; display: flex; align-items: center; }
.current { position: relative; }
.current .pname { background: #4a9eff; margin-left: 2px; padding-left: 34px; border-right: none; }
.editor {
    position: absolute;
    left: 152px;
    top: 0;
    width: 323px;
    height: 38px;
    background: #fff;
    border: 1px solid #b28fe0;
    display: flex;
    align-items: flex-start;
    z-index: 1;
}
.edit-text { margin: 8px 0 0 12px; display: flex; line-height: 24px; white-space: pre; }
.edit-sel { background: #4a9eff; color: #14263f; }
.edit-caret { width: 2px; height: 24px; background: #111; }
.edit-fx { width: 20px; height: 20px; margin: 3px 0 0 auto; }
.spin { width: 21px; height: 36px; margin-left: 11px; border-left: 1px solid #ddd; display: flex; flex-direction: column; }
.spin b { flex: 1; display: flex; align-items: center; justify-content: center; }
.spin b + b { border-top: 1px solid #ddd; }
.up { width: 0; height: 0; border-left: 4px solid transparent; border-right: 4px solid transparent; border-bottom: 4px solid #777; }
.down { width: 0; height: 0; border-left: 4px solid transparent; border-right: 4px solid transparent; border-top: 4px solid #777; }

.scrollbar { width: 20px; margin-left: 1px; display: flex; flex-direction: column; border-right: 2px solid #c8c8c8; }
.sb-btn { height: 20px; flex: none; background: #f6f6f6; display: flex; align-items: center; justify-content: center; }
.sb-trough { height: 127px; background: #e4e4e4; flex: none; }
.sb-trough.small { height: 14px; }
.sb-thumb { flex: 1; background: #fafafa; border-top: 1px solid #c8c8c8; border-bottom: 1px solid #c8c8c8; }

.prop-tabs { display: flex; flex: 1; align-items: flex-start; font-size: 10px; gap: 1px; }
.prop-tab {
    width: 37px;
    height: 26px;
    display: flex;
    align-items: center;
    justify-content: center;
    background: #d8d8d8;
    border: 1px solid #b8b8b8;
    border-top: none;
    border-radius: 0 0 3px 3px;
    color: #777;
}
.prop-tab.active { height: 30px; background: #f8f8f8; color: #222; }

/* 3d view */
.work { flex: 1; min-width: 0; display: flex; flex-direction: column; position: relative; }
.viewport { flex: 1; background: #fff; position: relative; overflow: hidden; }
.model { position: absolute; inset: 0; }
.letter {
    position: absolute;
    font-family: "DejaVu Sans", sans-serif;
    font-weight: bold;
    font-size: 185px;
    line-height: 1;
    color: #aeb5c0;
    -webkit-text-stroke: 1.5px #111;
    text-shadow: -2px -.2px 0 #3b3e44, -4px -.4px 0 #3b3e44, -6px -.7px 0 #3b3e44, -8px -.9px 0 #3b3e44,
        -10px -1.1px 0 #3b3e44, -12px -1.3px 0 #3b3e44, -14px -1.6px 0 #3b3e44, -16px -1.8px 0 #3b3e44,
        -18px -2px 0 #3b3e44, -20px -2.2px 0 #3b3e44;
    transform: rotate(-4deg);
}
.l3 { left: 396px; top: 226px; }
.ld { left: 473px; top: 212px; }
.lp { left: 558px; top: 217px; }
.lr { left: 633px; top: 198px; }
.li { left: 733px; top: 207px; }
.ln { left: 761px; top: 189px; }
.lt { left: 881px; top: 190px; transform: rotate(-4deg) scaleX(.86); }
.cylinder { position: absolute; left: 724px; top: 388px; width: 100px; height: 70px; }

.navcube { position: absolute; right: 0; top: -4px; width: 158px; height: 150px; }
.nav-top { font-family: "Liberation Sans", sans-serif; font-size: 39px; fill: #8a8f96; text-anchor: middle; }
.nav-side { font-family: "Liberation Sans", sans-serif; font-size: 15px; fill: #777; letter-spacing: 4px; }
.axes { position: absolute; right: 4px; top: 604px; width: 34px; height: 40px; }
.axes text { font-family: "Liberation Sans", sans-serif; font-size: 8px; fill: #333; }

.doc-tabs { height: 52px; flex: none; display: flex; align-items: flex-start; padding-top: 1px; }
.doc-tab {
    height: 44px;
    display: flex;
    align-items: center;
    border: 1px solid #a9a9a9;
    border-top: 1px solid #c8c8c8;
    border-radius: 0 0 3px 3px;
    font-size: 9.5px;
    color: #666;
    white-space: nowrap;
    background: linear-gradient(#e2e2e2, #cfcfcf);
}
.doc-tab.start { width: 121px; padding: 0 10px; }
.doc-tab.active { width: 200px; height: 48px; margin-left: 1px; padding: 0 11px; color: #111; font-size: 10px; background: linear-gradient(#f4f4f4 55%, #fdfdfd); }
.doc-icon { width: 22px; height: 24px; flex: none; }
.doc-tab span { margin-left: 16px; }
.doc-close { width: 20px; height: 20px; margin-left: auto; margin-right: 2px; flex: none; }

.activate { position: absolute; left: 1093px; bottom: 3px; color: #c2c2c2; white-space: nowrap; pointer-events: none; }
.act-big { font-size: 19px; line-height: 24px; }
.act-small { font-size: 14.2px; line-height: 21px; }

/* status bar */
.statusbar { height: 40px; flex: none; display: flex; align-items: center; padding-left: 3px; font-size: 10px; }
.status-msg { margin-right: auto; }
.st-combo {
    width: 134px;
    height: 34px;
    margin-right: 9px;
    display: flex;
    align-items: center;
    padding-left: 3px;
    background: linear-gradient(#eaeaea, #fbfbfb);
    border: 1px solid #b0b0b0;
    border-radius: 3px;
}
.st-swatch { width: 20px; height: 20px; background: linear-gradient(135deg, #5c8bc8, #2f619f); }
.st-combo .caret { margin-left: auto; margin-right: 8px; border-top-color: #666; margin-top: 5px; }
.nav { padding-left: 43px; }
.nav svg { width: 14px; height: 22px; }
.nav span { margin-left: 9px; font-size: 10px; letter-spacing: -.4px; }
.st-dim {
    width: 145px;
    height: 28px;
    margin-left: 1px;
    display: flex;
    align-items: center;
    padding-left: 7px;
    background: #f8f8f8;
    border: 1px solid #b0b0b0;
    border-right: none;
    border-radius: 3px;
    white-space: nowrap;
    font-size: 10.5px;
    letter-spacing: -.2px;
}
.st-dim .caret { margin-left: auto; margin-right: 3px; border-top-color: #666; margin-top: -5px; }
```
